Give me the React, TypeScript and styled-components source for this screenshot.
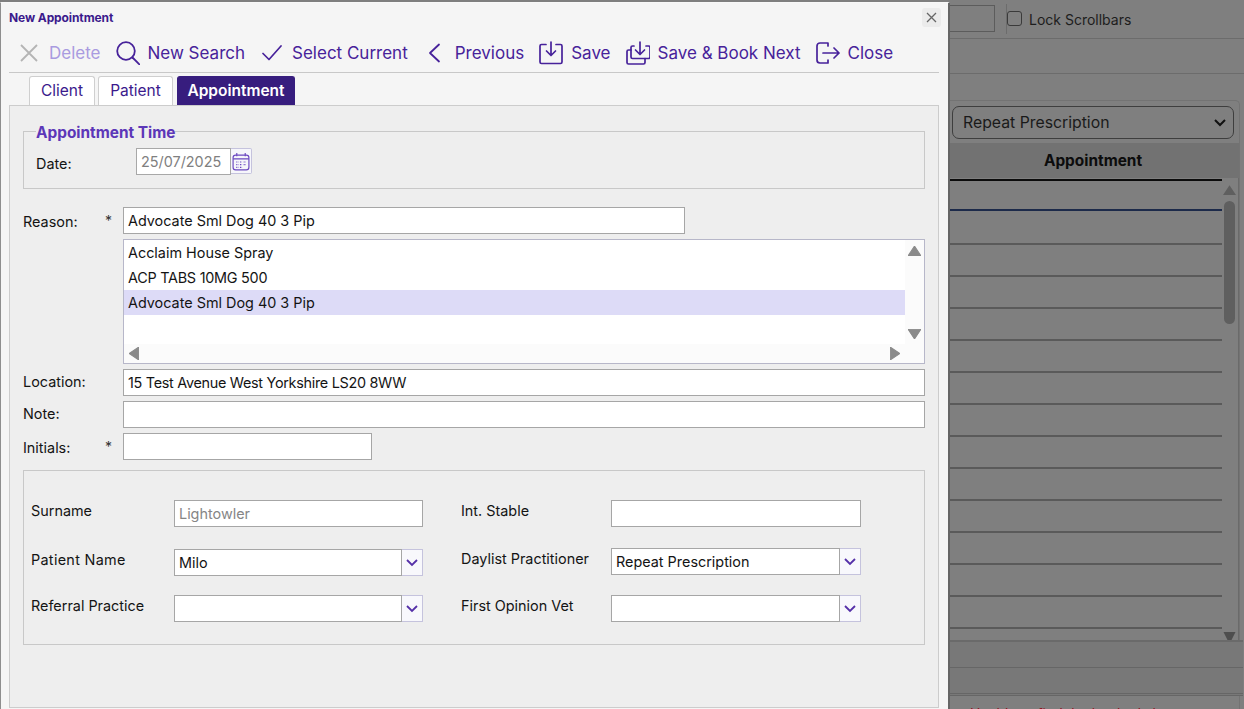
import React from 'react';
import styled, { createGlobalStyle } from 'styled-components';

const Global = createGlobalStyle`
  html, body { margin: 0; padding: 0; background: #7f7f7f; }
  body { font-family: "Inter", "Liberation Sans", sans-serif; color: #141414; }
  * { box-sizing: border-box; }
`;
const Page = styled.div`position: relative; width: 1244px; height: 709px; overflow: hidden; background: #7f7f7f;`;

/* dimmed page behind */
const Backdrop = styled.div`display: flex; flex-direction: column; height: 709px; padding-left: 950px;`;
const TopBar = styled.div`flex: none; display: flex; align-items: center; height: 39px; border-bottom: 1px solid #6c6c6c;`;
const DimInput = styled.div`width: 45px; height: 27px; margin-top: -1px; border: 1px solid #5c5c5c; border-left: none; background: #7f7f7f;`;
const Divider = styled.div`width: 1px; height: 30px; margin: 0 0 0 11px; background: #6c6c6c;`;
const DimCheck = styled.div`width: 15px; height: 15px; margin: -2px 0 0 0; border: 1px solid #3a3a3a; border-radius: 3px; background: #808080;`;
const LockText = styled.span`margin: 1px 0 0 7px; font-size: 14px; color: #1d1d1d;`;
const EmptyBar = styled.div`flex: none; height: 35px; border-bottom: 1px solid #6c6c6c;`;
const DimPanel = styled.div`flex: none; display: flex; flex-direction: column; margin-top: 26px; margin-right: 4px; border: 1px solid #737373; border-left: none; border-bottom: none; border-radius: 0 5px 0 0; padding-top: 5px;`;
const DimSelect = styled.div`flex: none; display: flex; align-items: center; justify-content: space-between; height: 33px; margin: 0 5px 0 2px; padding: 0 6px 0 10px; border: 1px solid #3e3e3e; border-radius: 7px; font-size: 15.8px; color: #1a1a1a;`;
const DimHeader = styled.div`flex: none; display: flex; align-items: center; justify-content: center; height: 35px; margin-top: 4px; padding-right: 3px; background: #727272; font-size: 15.4px; font-weight: 700; color: #0c0c0c;`;
const DimGrid = styled.div`position: relative; flex: none; height: 462px; padding-right: 16px; border-right: 1px solid #6a6a6a;`;
const DimRow = styled.div<{ $h: number; $c: string }>`height: ${p => p.$h}px; border-bottom: 2px solid ${p => p.$c};`;
const DimScrollTrack = styled.div`position: absolute; right: 1px; top: 0; bottom: 0; width: 15px; display: flex; flex-direction: column; align-items: center; padding-top: 7px;`;
const DimThumb = styled.div`width: 11px; height: 123px; margin-top: 6px; border-radius: 6px; background: #5f5f5f;`;
const DimSpring = styled.div`flex: 1;`;
const DimFoot = styled.div`flex: none; height: 28px; margin: 0 -4px; border-top: 2px solid #6a6a6a; background: #787878; border-bottom: 1px solid #666;`;
const DimFoot2 = styled.div`flex: none; height: 28px; margin: 0 -4px; background: #787878; border-bottom: 3px double #666;`;
const RedText = styled.div`margin: 10px 0 0 20px; font-size: 14px; line-height: 16px; color: #8f0f1e; white-space: nowrap;`;

/* dialog */
const Dialog = styled.div`position: absolute; left: 0; top: 2px; width: 950px; height: 720px; background: #f5f5f5; border-left: 1px solid #8e8e8e; border-top: 1px solid #f8f8f8; border-right: 2px solid #666; padding: 0 9px 0 8px;`;
const TitleBar = styled.div`display: flex; align-items: center; justify-content: space-between; height: 30px; padding-bottom: 2px;`;
const Title = styled.h1`margin: 0; font-size: 12px; font-weight: 700; color: #3b1a8c; letter-spacing: -0.1px;`;
const CloseBox = styled.button`display: flex; align-items: center; justify-content: center; width: 19px; height: 19px; margin: 0 -2px 0 0; padding: 0; border: none; border-radius: 3px; background: #ebebeb;`;
const Toolbar = styled.div`display: flex; align-items: center; gap: 15px; height: 40px; padding: 0 0 0 8px; border-bottom: 1px solid #c8c8c8;`;
const ToolButton = styled.div<{ $off?: boolean }>`display: flex; align-items: center; gap: 8px; font-size: 17px; white-space: nowrap; color: ${p => (p.$off ? '#a99be0' : '#47229a')};`;
const IconSlot = styled.span`display: flex; align-items: center; justify-content: center; width: 24px; height: 26px;`;
const Tabs = styled.div`display: flex; height: 32px; padding: 3px 0 0 20px; gap: 3px;`;
const Tab = styled.div<{ $on?: boolean; $w: number }>`display: flex; align-items: center; justify-content: center; width: ${p => p.$w}px; height: 29px; padding-bottom: 2px; margin-left: ${p => (p.$on ? 1 : 0)}px; border: 1px solid ${p => (p.$on ? '#371d7e' : '#cfcfcf')}; border-bottom: none; border-radius: 3px 3px 0 0; background: ${p => (p.$on ? '#371d7e' : '#fff')}; color: ${p => (p.$on ? '#fff' : '#3b1a8c')}; font-size: 15.5px; font-weight: ${p => (p.$on ? 600 : 400)};`;
const Body = styled.div`height: 603px; padding: 25px 13px 0 13px; background: #eeeeee; border: 1px solid #cccccc;`;
const Fieldset = styled.fieldset`margin: 0; height: 58px; padding: 0 0 0 12px; border: 1px solid #c8c8c8; display: flex; align-items: flex-start;`;
const Legend = styled.legend`padding: 0; font-size: 15.4px; line-height: 4px; height: 1px; font-weight: 700; color: #5c37b8;`;
const DateLabel = styled.span`width: 100px; margin-top: 23px; font-size: 14.4px;`;
const DateRow = styled.div`display: flex; margin-top: 16px;`;
const DateInput = styled.div`display: flex; align-items: center; width: 95px; height: 27px; padding-left: 4px; border: 1px solid #a8a8a8; background: #fff; font-size: 14.4px; color: #808080;`;
const CalButton = styled.div`display: flex; align-items: center; justify-content: center; width: 21px; height: 26px; border: 1px solid #c5c3dd; border-left: none; border-radius: 0 2px 2px 0; background: #f6f6fb;`;
const Rows = styled.div`display: flex; flex-direction: column; margin-top: 18px;`;
const FieldRow = styled.div<{ $mt?: number }>`display: flex; align-items: flex-start; margin-top: ${p => p.$mt ?? 0}px;`;
const RowLabel = styled.label<{ $dy: number }>`flex: 0 0 82px; font-size: 14.4px; line-height: 27px; margin-top: ${p => p.$dy}px;`;
const Star = styled.span`flex: 0 0 18px; font-size: 14px; line-height: 28px; text-align: left; color: #333;`;
const Field = styled.div<{ $w?: number; $muted?: boolean; $ls?: number }>`display: flex; align-items: center; ${p => (p.$w ? `width: ${p.$w}px;` : 'flex: 1;')} height: 27px; padding: 0 4px; background: #fff; border: 1px solid #a6a6a6; font-size: 14.4px; letter-spacing: ${p => p.$ls ?? 0}px; white-space: nowrap; color: ${p => (p.$muted ? '#868686' : '#141414')};`;
const Listbox = styled.div`display: grid; grid-template-columns: 1fr 19px; grid-template-rows: 104px 19px; height: 125px; margin: 4px 0 5px 100px; background: #fff; border: 1px solid #b7b7c9;`;
const ListItems = styled.div`display: flex; flex-direction: column; overflow: hidden;`;
const ListItem = styled.div<{ $sel?: boolean; $ls?: number }>`display: flex; align-items: center; height: 25px; flex: none; padding-left: 4px; background: ${p => (p.$sel ? '#dddbf7' : '#fff')}; font-size: 14.4px; letter-spacing: ${p => p.$ls ?? 0}px;`;
const VScroll = styled.div`display: flex; flex-direction: column; align-items: center; justify-content: space-between; padding: 6px 0 5px; background: #fbfbfb;`;
const HScroll = styled.div`display: flex; align-items: center; justify-content: space-between; padding: 0 5px 0 5px; background: #fbfbfb;`;
const Corner = styled.div`background: #fbfbfb;`;
const SubPanel = styled.div`display: grid; grid-template-columns: 430px 1fr; height: 175px; margin-top: 9px; padding: 29px 0 0 7px; border: 1px solid #c8c8c8;`;
const SubCol = styled.div`display: grid; grid-template-columns: 143px 249px; grid-template-rows: 48px 47px 47px; align-items: start;`;
const SubCol2 = styled(SubCol)`grid-template-columns: 150px 250px;`;
const SubLabel = styled.span<{ $mt?: number; $ls?: number }>`font-size: 14.4px; line-height: 20px; letter-spacing: ${p => p.$ls ?? 0}px; margin-top: ${p => p.$mt ?? 0}px;`;
const Combo = styled.div<{ $mt?: number }>`display: flex; margin-top: ${p => p.$mt ?? 0}px;`;
const ComboText = styled.div`display: flex; align-items: center; flex: 1; height: 27px; padding: 0 4px; background: #fff; border: 1px solid #a6a6a6; font-size: 14.4px;`;
const ComboBtn = styled.div`display: flex; align-items: center; justify-content: center; width: 21px; height: 27px; background: #f8f8fc; border: 1px solid #c5c3dd; border-left: none;`;
const TopField = styled(Field)`width: 100%;`;

const stroke = { fill: 'none', stroke: '#47229a', strokeLinecap: 'round' as const, strokeLinejoin: 'round' as const };

const Tri = ({ d }: { d: 'up' | 'down' | 'left' | 'right' }) => {
  const pts = { up: '6,0 12,9 0,9', down: '0,0 12,0 6,9', left: '9,0 9,12 0,6', right: '0,0 9,6 0,12' }[d];
  const w = d === 'up' || d === 'down' ? 13 : 10;
  const h = d === 'up' || d === 'down' ? 10 : 13;
  return <svg width={w} height={h} viewBox={`0 0 ${w - 1} ${h - 1}`}><polygon points={pts} fill="#8a8a8a" stroke="#8a8a8a" strokeWidth="1" strokeLinejoin="round" /></svg>;
};
const Chevron = () => (
  <svg width="12" height="8" viewBox="0 0 12 8"><path d="M1 1l5 5 5-5" fill="none" stroke="#5530a8" strokeWidth="1.8" /></svg>
);
const SaveGlyph = () => (
  <svg width="24" height="24" viewBox="0 0 24 24" {...stroke} strokeWidth="1.7">
    <path d="M7 3.500H2.500A1.500 1.500 0 0 0 1 5v16a1.500 1.500 0 0 0 1.500 1.500h19a1.500 1.500 0 0 0 1.500-1.500V5a1.500 1.500 0 0 0-1.500-1.500H17" />
    <path d="M12 1v13M7.500 10l4.500 4.500 4.500-4.500" />
  </svg>
);
const SaveNextGlyph = () => (
  <svg width="24" height="24" viewBox="0 0 24 24" {...stroke} strokeWidth="1.7">
    <path d="M8 5H6.500A1.500 1.500 0 0 0 5 6.500V16a1.500 1.500 0 0 0 1.500 1.500h16A1.500 1.500 0 0 0 24 16V6.500A1.500 1.500 0 0 0 22.500 5H20" />
    <path d="M5 9H2.500A1.500 1.500 0 0 0 1 10.500V21.500A1.500 1.500 0 0 0 2.500 23h15a1.500 1.500 0 0 0 1.500-1.500v-4" />
    <path d="M14 1v12M9.500 9l4.500 4.500L18.500 9" />
  </svg>
);

const DIM_ROWS = [34, 32, 32, 32, 32, 32, 32, 32, 32, 32, 32, 32, 32];

export default function App() {
  return (
    <Page>
      <Global />
      <Backdrop>
        <TopBar>
          <DimInput />
          <Divider />
          <DimCheck />
          <LockText>Lock Scrollbars</LockText>
        </TopBar>
        <EmptyBar />
        <DimPanel>
          <DimSelect>
            Repeat Prescription
            <svg width="14" height="9" viewBox="0 0 14 9"><path d="M2 2l5 5 5-5" fill="none" stroke="#111" strokeWidth="2" /></svg>
          </DimSelect>
          <DimHeader>Appointment</DimHeader>
          <DimGrid>
            <DimRow $h={3} $c="#0c0c0c" />
            <DimRow $h={30} $c="#1c2a4a" />
            {DIM_ROWS.map((h, i) => <DimRow key={i} $h={h} $c="#5a5a5a" />)}
            <DimScrollTrack>
              <svg width="13" height="10" viewBox="0 0 12 9"><polygon points="6,0 12,9 0,9" fill="#5f5f5f" /></svg>
              <DimThumb />
              <DimSpring />
              <svg width="13" height="8" viewBox="0 0 12 8"><polygon points="0,0 12,0 8,8 4,8" fill="#4e4e4e" /></svg>
            </DimScrollTrack>
          </DimGrid>
          <DimFoot />
          <DimFoot2 />
          <RedText>Unable to find the booked slot</RedText>
        </DimPanel>
      </Backdrop>

      <Dialog>
        <TitleBar>
          <Title>New Appointment</Title>
          <CloseBox aria-label="close">
            <svg width="11" height="11" viewBox="0 0 11 11"><path d="M1 1l9 9M10 1l-9 9" stroke="#666" strokeWidth="1.3" fill="none" /></svg>
          </CloseBox>
        </TitleBar>
        <Toolbar>
          <ToolButton $off>
            <IconSlot><svg width="18" height="18" viewBox="0 0 18 18"><path d="M1 1l16 16M17 1L1 17" stroke="#b4b4b4" strokeWidth="1.8" fill="none" /></svg></IconSlot>
            Delete
          </ToolButton>
          <ToolButton>
            <IconSlot><svg width="24" height="24" viewBox="0 0 24 24" {...stroke} strokeWidth="1.8"><circle cx="10" cy="10" r="8.800" /><path d="M16.500 16.500l7 7" /></svg></IconSlot>
            New Search
          </ToolButton>
          <ToolButton>
            <IconSlot><svg width="20" height="16" viewBox="0 0 20 16" {...stroke} strokeWidth="1.7"><path d="M1 8.500l6 6L19 1" /></svg></IconSlot>
            Select Current
          </ToolButton>
          <ToolButton>
            <IconSlot><svg width="13" height="20" viewBox="0 0 13 20" {...stroke} strokeWidth="1.8"><path d="M11 1.500L2 10l9 8.500" /></svg></IconSlot>
            Previous
          </ToolButton>
          <ToolButton><IconSlot><SaveGlyph /></IconSlot>Save</ToolButton>
          <ToolButton><IconSlot><SaveNextGlyph /></IconSlot>Save &amp; Book Next</ToolButton>
          <ToolButton>
            <IconSlot><svg width="24" height="22" viewBox="0 0 24 22" {...stroke} strokeWidth="1.7"><path d="M12 1H4a3 3 0 0 0-3 3v14a3 3 0 0 0 3 3h8M12 1v3M12 18v3M7 11h16M18 6l5 5-5 5" /></svg></IconSlot>
            Close
          </ToolButton>
        </Toolbar>
        <Tabs>
          <Tab $w={66}>Client</Tab>
          <Tab $w={75}>Patient</Tab>
          <Tab $w={118} $on>Appointment</Tab>
        </Tabs>
        <Body>
          <Fieldset>
            <Legend>Appointment Time</Legend>
            <DateLabel>Date:</DateLabel>
            <DateRow>
              <DateInput>25/07/2025</DateInput>
              <CalButton>
                <svg width="18" height="19" viewBox="0 0 17 18" fill="none" stroke="#6b48c0" strokeWidth="1.1">
                  <rect x="1" y="3" width="15" height="14" rx="2.500" />
                  <path d="M1 6.500h15M4.500 1v3M12.500 1v3" />
                  <path d="M4 9.500h2M7.500 9.500h2M11 9.500h2M4 12h2M7.500 12h2M11 12h2M4 14.500h2M7.500 14.500h2" strokeDasharray="1 0.600" />
                </svg>
              </CalButton>
            </DateRow>
          </Fieldset>
          <Rows>
            <FieldRow>
              <RowLabel $dy={1}>Reason:</RowLabel>
              <Star>*</Star>
              <Field $w={562}>Advocate Sml Dog 40 3 Pip</Field>
            </FieldRow>
            <Listbox>
              <ListItems>
                <ListItem>Acclaim House Spray</ListItem>
                <ListItem $ls={-0.25}>ACP TABS 10MG 500</ListItem>
                <ListItem $sel>Advocate Sml Dog 40 3 Pip</ListItem>
              </ListItems>
              <VScroll><Tri d="up" /><Tri d="down" /></VScroll>
              <HScroll><Tri d="left" /><Tri d="right" /></HScroll>
              <Corner />
            </Listbox>
            <FieldRow>
              <RowLabel $dy={-1}>Location:</RowLabel>
              <Star />
              <Field $ls={-0.29}>15 Test Avenue West Yorkshire LS20 8WW</Field>
            </FieldRow>
            <FieldRow $mt={5}>
              <RowLabel $dy={-1}>Note:</RowLabel>
              <Star />
              <Field />
            </FieldRow>
            <FieldRow $mt={5}>
              <RowLabel $dy={1}>Initials:</RowLabel>
              <Star>*</Star>
              <Field $w={249} />
            </FieldRow>
          </Rows>
          <SubPanel>
            <SubCol>
              <SubLabel $mt={1}>Surname</SubLabel>
              <TopField $muted>Lightowler</TopField>
              <SubLabel $mt={2} $ls={0.3}>Patient Name</SubLabel>
              <Combo $mt={1}><ComboText>Milo</ComboText><ComboBtn><Chevron /></ComboBtn></Combo>
              <SubLabel $mt={1}>Referral Practice</SubLabel>
              <Combo><ComboText /><ComboBtn><Chevron /></ComboBtn></Combo>
            </SubCol>
            <SubCol2>
              <SubLabel $mt={1}>Int. Stable</SubLabel>
              <TopField />
              <SubLabel $mt={1}>Daylist Practitioner</SubLabel>
              <Combo><ComboText>Repeat Prescription</ComboText><ComboBtn><Chevron /></ComboBtn></Combo>
              <SubLabel $mt={1}>First Opinion Vet</SubLabel>
              <Combo><ComboText /><ComboBtn><Chevron /></ComboBtn></Combo>
            </SubCol2>
          </SubPanel>
        </Body>
      </Dialog>
    </Page>
  );
}
